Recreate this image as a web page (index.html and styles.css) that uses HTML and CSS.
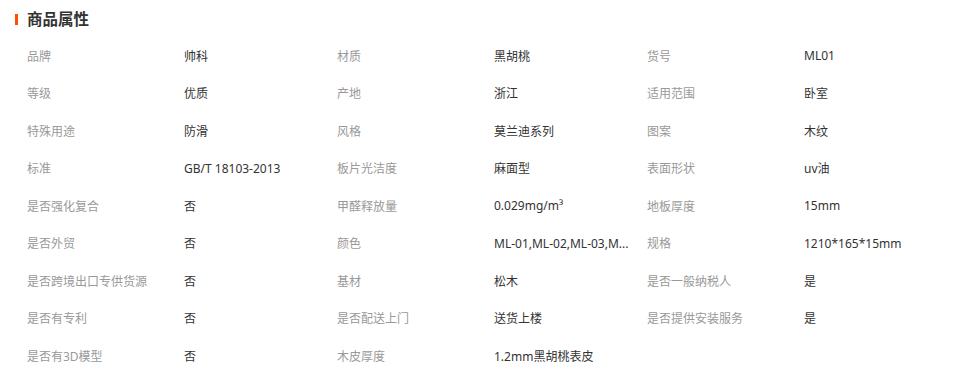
FILE: index.html
```html
<!DOCTYPE html>
<html lang="zh-CN">
<head>
<meta charset="utf-8">
<title>商品属性</title>
<link rel="stylesheet" href="styles.css">
</head>
<body>
<div class="attrs">
  <h2 class="attrs-title"><span class="attrs-bar"></span>商品属性</h2>
  <div class="attrs-grid">
    <div class="attr"><span class="attr-label">品牌</span><span class="attr-value">帅科</span></div>
    <div class="attr"><span class="attr-label">材质</span><span class="attr-value">黑胡桃</span></div>
    <div class="attr"><span class="attr-label">货号</span><span class="attr-value">ML01</span></div>
    <div class="attr"><span class="attr-label">等级</span><span class="attr-value">优质</span></div>
    <div class="attr"><span class="attr-label">产地</span><span class="attr-value">浙江</span></div>
    <div class="attr"><span class="attr-label">适用范围</span><span class="attr-value">卧室</span></div>
    <div class="attr"><span class="attr-label">特殊用途</span><span class="attr-value">防滑</span></div>
    <div class="attr"><span class="attr-label">风格</span><span class="attr-value">莫兰迪系列</span></div>
    <div class="attr"><span class="attr-label">图案</span><span class="attr-value">木纹</span></div>
    <div class="attr"><span class="attr-label">标准</span><span class="attr-value">GB/T 18103-2013</span></div>
    <div class="attr"><span class="attr-label">板片光洁度</span><span class="attr-value">麻面型</span></div>
    <div class="attr"><span class="attr-label">表面形状</span><span class="attr-value">uv油</span></div>
    <div class="attr"><span class="attr-label">是否强化复合</span><span class="attr-value">否</span></div>
    <div class="attr"><span class="attr-label">甲醛释放量</span><span class="attr-value">0.029mg/m³</span></div>
    <div class="attr"><span class="attr-label">地板厚度</span><span class="attr-value">15mm</span></div>
    <div class="attr"><span class="attr-label">是否外贸</span><span class="attr-value">否</span></div>
    <div class="attr"><span class="attr-label">颜色</span><span class="attr-value">ML-01,ML-02,ML-03,M...</span></div>
    <div class="attr"><span class="attr-label">规格</span><span class="attr-value">1210*165*15mm</span></div>
    <div class="attr"><span class="attr-label">是否跨境出口专供货源</span><span class="attr-value">否</span></div>
    <div class="attr"><span class="attr-label">基材</span><span class="attr-value">松木</span></div>
    <div class="attr"><span class="attr-label">是否一般纳税人</span><span class="attr-value">是</span></div>
    <div class="attr"><span class="attr-label">是否有专利</span><span class="attr-value">否</span></div>
    <div class="attr"><span class="attr-label">是否配送上门</span><span class="attr-value">送货上楼</span></div>
    <div class="attr"><span class="attr-label">是否提供安装服务</span><span class="attr-value">是</span></div>
    <div class="attr"><span class="attr-label">是否有3D模型</span><span class="attr-value">否</span></div>
    <div class="attr"><span class="attr-label">木皮厚度</span><span class="attr-value">1.2mm黑胡桃表皮</span></div>
  </div>
</div>
</body>
</html>
```

FILE: styles.css
```css
html, body {
  margin: 0;
  padding: 0;
  background: #fff;
}
body {
  font-family: "Noto Sans", "Noto Sans CJK SC", sans-serif;
  font-size: 12px;
  color: #333;
}
.attrs {
  padding: 10px 0 0 15px;
}
.attrs-title {
  display: flex;
  align-items: center;
  margin: 0;
  height: 18px;
  font-size: 15.5px;
  font-weight: bold;
  color: #333;
  line-height: 18px;
}
.attrs-bar {
  display: inline-block;
  width: 3px;
  height: 11px;
  background: #ff5000;
  margin-right: 9px;
}
.attrs-grid {
  display: grid;
  grid-template-columns: repeat(3, 310px);
  grid-auto-rows: 37.5px;
  margin-top: 9px;
  padding-left: 12px;
}
.attr {
  display: flex;
  align-items: center;
  white-space: nowrap;
}
.attr-label {
  width: 157px;
  flex: none;
  color: #999;
}
.attr-value {
  color: #333;
}
```
